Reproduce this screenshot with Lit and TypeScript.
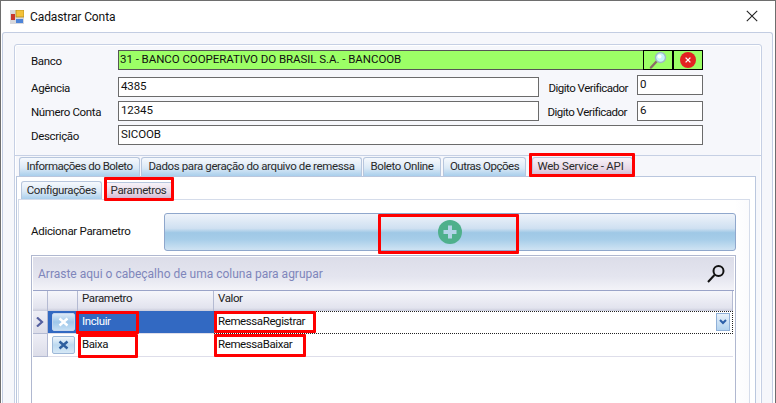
import { LitElement, html, css } from "lit";
import { customElement } from "lit/decorators.js";

@customElement("app-root")
export class AppRoot extends LitElement {
  static styles = css`
    :host { display: block; width: 776px; height: 403px; overflow: hidden; font-family: Roboto, "Liberation Sans", sans-serif; font-size: 11.5px; letter-spacing: -0.2px; color: #111; background: #fff; }
    * { box-sizing: border-box; }
    .window { height: 403px; border: 1px solid #6e6e6e; border-bottom: 0; display: flex; flex-direction: column; overflow: hidden; background: #fff; }
    .title { height: 31px; flex: none; display: flex; align-items: center; padding: 0 0 0 9px; gap: 6px; font-size: 12px; letter-spacing: -0.1px; }
    .title .name { flex: 1; }
    .close { width: 36px; display: flex; justify-content: center; margin-right: 5px; margin-top: -2px; }
    .content { flex: 1; margin: 0 2px 0 1px; border: 1px solid #c3cde2; border-bottom: 0; border-radius: 3px 3px 0 0; background: #f6f7fb; padding: 11px 11px 0 11px; min-height: 0; }
    .outer { width: 748px; height: 400px; border: 1px solid #c6d0e4; border-radius: 3px 3px 0 0; box-shadow: inset 0 0 0 1px #fff; }
    .group { height: 111px; padding: 5px 0 0 16px; border-bottom: 1px solid #c6d0e4; display: flex; flex-direction: column; }
    .row { display: flex; height: 20px; margin-bottom: 4px; white-space: nowrap; }
    .row.first { margin-bottom: 7px; }
    .lab { width: 87px; flex: none; padding-top: 3px; line-height: 16px; letter-spacing: -0.35px; }
    .in { height: 20px; border: 1px solid #6b6b6b; background: #fff; padding: 1px 2px 0; line-height: 14px; overflow: hidden; white-space: nowrap; letter-spacing: -0.1px; }
    .bank { width: 585px; display: flex; background: #9cff66; border-color: #555; padding: 0; position: relative; overflow: visible; letter-spacing: -0.05px; }
    .bank .txt { flex: 1; padding: 1px 2px 0 1px; }
    .ib { width: 30px; height: 20px; margin-top: -1px; border: 1px solid #000; display: flex; align-items: center; justify-content: center; flex: none; }
    .ib + .ib { margin-right: -1px; }
    .mid { width: 421px; flex: none; }
    .dv { width: 89px; flex: none; text-align: right; padding-top: 3px; line-height: 16px; margin-right: 9px; letter-spacing: -0.5px; }
    .dv.b { width: 88px; margin-right: 10px; }
    .small { width: 66px; flex: none; }
    .small.up { margin-top: -2px; }
    .wide { width: 585px; }
    .tabs { display: flex; align-items: flex-end; height: 20px; padding-left: 4px; gap: 1px; position: relative; }
    .tab { height: 19px; flex: none; border: 1px solid #b7c6dd; border-bottom: 0; border-radius: 3px 3px 0 0; text-align: center; line-height: 17px; white-space: nowrap; background: linear-gradient(#f6f9fd, #dbe9f6 55%, #a9cfec); color: #2a2a2a; position: relative; letter-spacing: -0.38px; }
    .tab.on { background: linear-gradient(#f7f2f8, #e6d7e6 60%, #cfb5d0); }
    .t1 { width: 121px; letter-spacing: -0.5px; } .t2 { width: 221px; } .t3 { width: 78px; } .t4 { width: 83px; margin-left: 1px; letter-spacing: -0.5px; } .t5 { width: 101px; margin-left: 5px; padding-right: 4px; letter-spacing: -0.2px; }
    .panel { margin-left: 1px; width: 740px; height: 300px; border: 1px solid #bac7de; background: #fff; padding: 3px 5px 0 1px; }
    .subtabs { display: flex; align-items: flex-end; height: 19px; padding-left: 3px; gap: 2px; }
    .st1 { width: 81px; height: 18px; } .st2 { width: 69px; height: 17px; line-height: 14px; }
    .inner { border: 1px solid #d5dcea; border-bottom: 0; height: 280px; padding: 13px 0 0 12px; background: linear-gradient(90deg, #fff 98%, #fbfbfd); }
    .add { display: flex; height: 38px; }
    .add .lab2 { width: 133px; flex: none; padding-top: 10px; line-height: 16px; letter-spacing: -0.3px; }
    .bigbtn { width: 572px; height: 38px; flex: none; border: 1px solid #8fa7cc; border-radius: 3px; background: linear-gradient(#eef3fa, #cfe0f1 40%, #9fc8e6 52%, #a6cde9 70%, #cfe3f3); display: flex; align-items: center; justify-content: center; position: relative; }
    .grid { margin-top: 4px; width: 705px; height: 160px; border: 1px solid #b0b8d0; border-bottom: 0; background: #fff; }
    .drop { height: 34px; margin: 1px 1px 0; background: linear-gradient(#dcdde9, #e4e5ef 60%, #f3f3f8); display: flex; align-items: center; justify-content: space-between; padding: 0 8px 0 5px; color: #7f86bb; border-bottom: 1px solid #9aa3c8; font-size: 12px; letter-spacing: 0; }
    .gr { display: grid; grid-template-columns: 15px 30px 136px 519px; margin-left: 1px; width: 702px; }
    .hc { height: 20px; border-right: 1px solid #b4bad2; background: linear-gradient(#f6f6fb, #e2e3ee 85%, #c9cbdb); line-height: 15px; padding-left: 4px; color: #222; letter-spacing: -0.4px; }
    .hc:last-child { border-radius: 0 3px 0 0; }
    .cell { height: 23px; line-height: 20px; padding-left: 4px; position: relative; border-bottom: 1px solid #dedeea; letter-spacing: -0.4px; }
    .ind { background: linear-gradient(#eeeef6, #dcdde9); border-right: 1px solid #b4bad2; border-bottom: 1px solid #b4bad2; padding: 0; display: flex; align-items: center; justify-content: center; }
    .act { padding: 0; display: flex; align-items: center; justify-content: center; }
    .sel { background: #3269c2; color: #fff; }
    .focus { border-top: 1px dotted #222; border-bottom: 1px dotted #222; border-right: 1px dotted #222; line-height: 18px; }
    .xb { width: 23px; height: 18px; border: 1px solid #9db8d8; border-radius: 2px; background: linear-gradient(#f1f6fb, #bcd9f0 50%, #d6e8f6); display: flex; align-items: center; justify-content: center; }
    .sel .xb { border-color: #c4d6ee; background: linear-gradient(#dbe9f6, #9fc8ea 50%, #c4def3); }
    .drop-arrow { position: absolute; right: 2px; top: 1px; width: 14px; height: 18px; border: 1px solid #8fb0d8; background: linear-gradient(#e8f1fa, #b3d3ef); display: flex; align-items: center; justify-content: center; }
    .hl { position: absolute; border: 3px solid #f00; pointer-events: none; border-radius: 1px; z-index: 2; }
    .hl-tab5 { left: -4px; right: -3px; top: -5px; bottom: -1px; }
    .hl-par { left: -1px; right: -2px; top: -6px; bottom: -2px; }
    .hl-plus { left: 213px; width: 141px; top: 0; height: 40px; }
    .hl-inc { left: -2px; width: 63px; top: 0; height: 23px; }
    .hl-bai { left: 0; width: 60px; top: 0; height: 24px; }
    .hl-rr { left: 0; width: 102px; top: -1px; height: 22px; }
    .hl-rb { left: 0; width: 92px; top: 0; height: 23px; }
  `;

  private xIcon(c: string) {
    return html`<svg width="15" height="10" viewBox="0 0 15 10"><path d="M3.5 1.5 L11.5 8.5 M11.5 1.5 L3.5 8.5" stroke="${c}" stroke-width="2.4" fill="none"/></svg>`;
  }

  render() {
    return html`
      <div class="window">
        <div class="title">
          <svg width="14" height="14" viewBox="0 0 14 14">
            <rect x="0" y="0" width="14" height="14" fill="#d8d8dc"/>
            <rect x="6" y="0" width="8" height="7" fill="#f3c13a" stroke="#b58a1c" stroke-width=".8"/>
            <rect x="1" y="4" width="4" height="6" fill="#c8362c"/>
            <rect x="6" y="9" width="7" height="4" fill="#4d84d8"/>
          </svg>
          <span class="name">Cadastrar Conta</span>
          <div class="close">
            <svg width="12" height="12" viewBox="0 0 12 12"><path d="M.8.8 11.2 11.2M11.2.8.8 11.2" stroke="#222" stroke-width="1.1" fill="none"/></svg>
          </div>
        </div>
        <div class="content">
          <div class="outer">
            <div class="group">
              <div class="row first">
                <div class="lab">Banco</div>
                <div class="in bank">
                  <span class="txt">31 - BANCO COOPERATIVO DO BRASIL S.A. - BANCOOB</span>
                  <div class="ib">
                    <svg width="18" height="18" viewBox="0 0 18 18">
                      <path d="M2 16.500 7.500 10.500" stroke="#8d6a66" stroke-width="2.4" stroke-linecap="round"/>
                      <circle cx="11.500" cy="6.500" r="5" fill="#c9f2fb" stroke="#9fb9c2" stroke-width="1.4"/>
                      <circle cx="10.500" cy="5.500" r="2" fill="#fff"/>
                    </svg>
                  </div>
                  <div class="ib">
                    <svg width="16" height="16" viewBox="0 0 16 16">
                      <circle cx="8" cy="8" r="8" fill="#e32222"/>
                      <path d="M5.6 5.6 10.4 10.4M10.4 5.6 5.6 10.4" stroke="#fff" stroke-width="1.3"/>
                    </svg>
                  </div>
                </div>
              </div>
              <div class="row">
                <div class="lab">Agência</div>
                <div class="in mid">4385</div>
                <div class="dv">Digito Verificador</div>
                <div class="in small up">0</div>
              </div>
              <div class="row">
                <div class="lab">Número Conta</div>
                <div class="in mid">12345</div>
                <div class="dv b">Digito Verificador</div>
                <div class="in small">6</div>
              </div>
              <div class="row">
                <div class="lab">Descrição</div>
                <div class="in wide">SICOOB</div>
              </div>
            </div>
            <div class="tabs">
              <div class="tab t1">Informações do Boleto</div>
              <div class="tab t2">Dados para geração do arquivo de remessa</div>
              <div class="tab t3">Boleto Online</div>
              <div class="tab t4">Outras Opções</div>
              <div class="tab t5 on">Web Service - API<div class="hl hl-tab5"></div></div>
            </div>
            <div class="panel">
              <div class="subtabs">
                <div class="tab st1">Configurações</div>
                <div class="tab st2 on">Parametros<div class="hl hl-par"></div></div>
              </div>
              <div class="inner">
                <div class="add">
                  <div class="lab2">Adicionar Parametro</div>
                  <div class="bigbtn">
                    <svg width="24" height="24" viewBox="0 0 24 24">
                      <circle cx="12" cy="12" r="12" fill="#4fb08c"/>
                      <path d="M12 5.500V18.500M5.500 12H18.500" stroke="#b4d4e8" stroke-width="4"/>
                    </svg>
                    <div class="hl hl-plus"></div>
                  </div>
                </div>
                <div class="grid">
                  <div class="drop">
                    <span>Arraste aqui o cabeçalho de uma coluna para agrupar</span>
                    <svg width="20" height="20" viewBox="0 0 20 20"><circle cx="12.500" cy="7" r="5" fill="none" stroke="#111" stroke-width="2"/><path d="M8.500 11 2 18" stroke="#111" stroke-width="2"/></svg>
                  </div>
                  <div class="gr">
                    <div class="hc"></div><div class="hc"></div><div class="hc">Parametro</div><div class="hc">Valor</div>
                    <div class="cell ind"><svg width="8" height="10" viewBox="0 0 8 10"><path d="M1 .5 6 5 1 9.500" fill="none" stroke="#55609f" stroke-width="2.200"/></svg></div>
                    <div class="cell act sel"><div class="xb">${this.xIcon("#fff")}</div></div>
                    <div class="cell sel">Incluir<div class="hl hl-inc"></div></div>
                    <div class="cell focus">RemessaRegistrar<div class="hl hl-rr"></div>
                      <div class="drop-arrow"><svg width="8" height="6" viewBox="0 0 8 6"><path d="M1 1 4 4 7 1" fill="none" stroke="#2c5fa8" stroke-width="2"/></svg></div>
                    </div>
                    <div class="cell ind"></div>
                    <div class="cell act"><div class="xb">${this.xIcon("#2f5f9f")}</div></div>
                    <div class="cell">Baixa<div class="hl hl-bai"></div></div>
                    <div class="cell">RemessaBaixar<div class="hl hl-rb"></div></div>
                  </div>
                </div>
              </div>
            </div>
          </div>
        </div>
      </div>
    `;
  }
}
